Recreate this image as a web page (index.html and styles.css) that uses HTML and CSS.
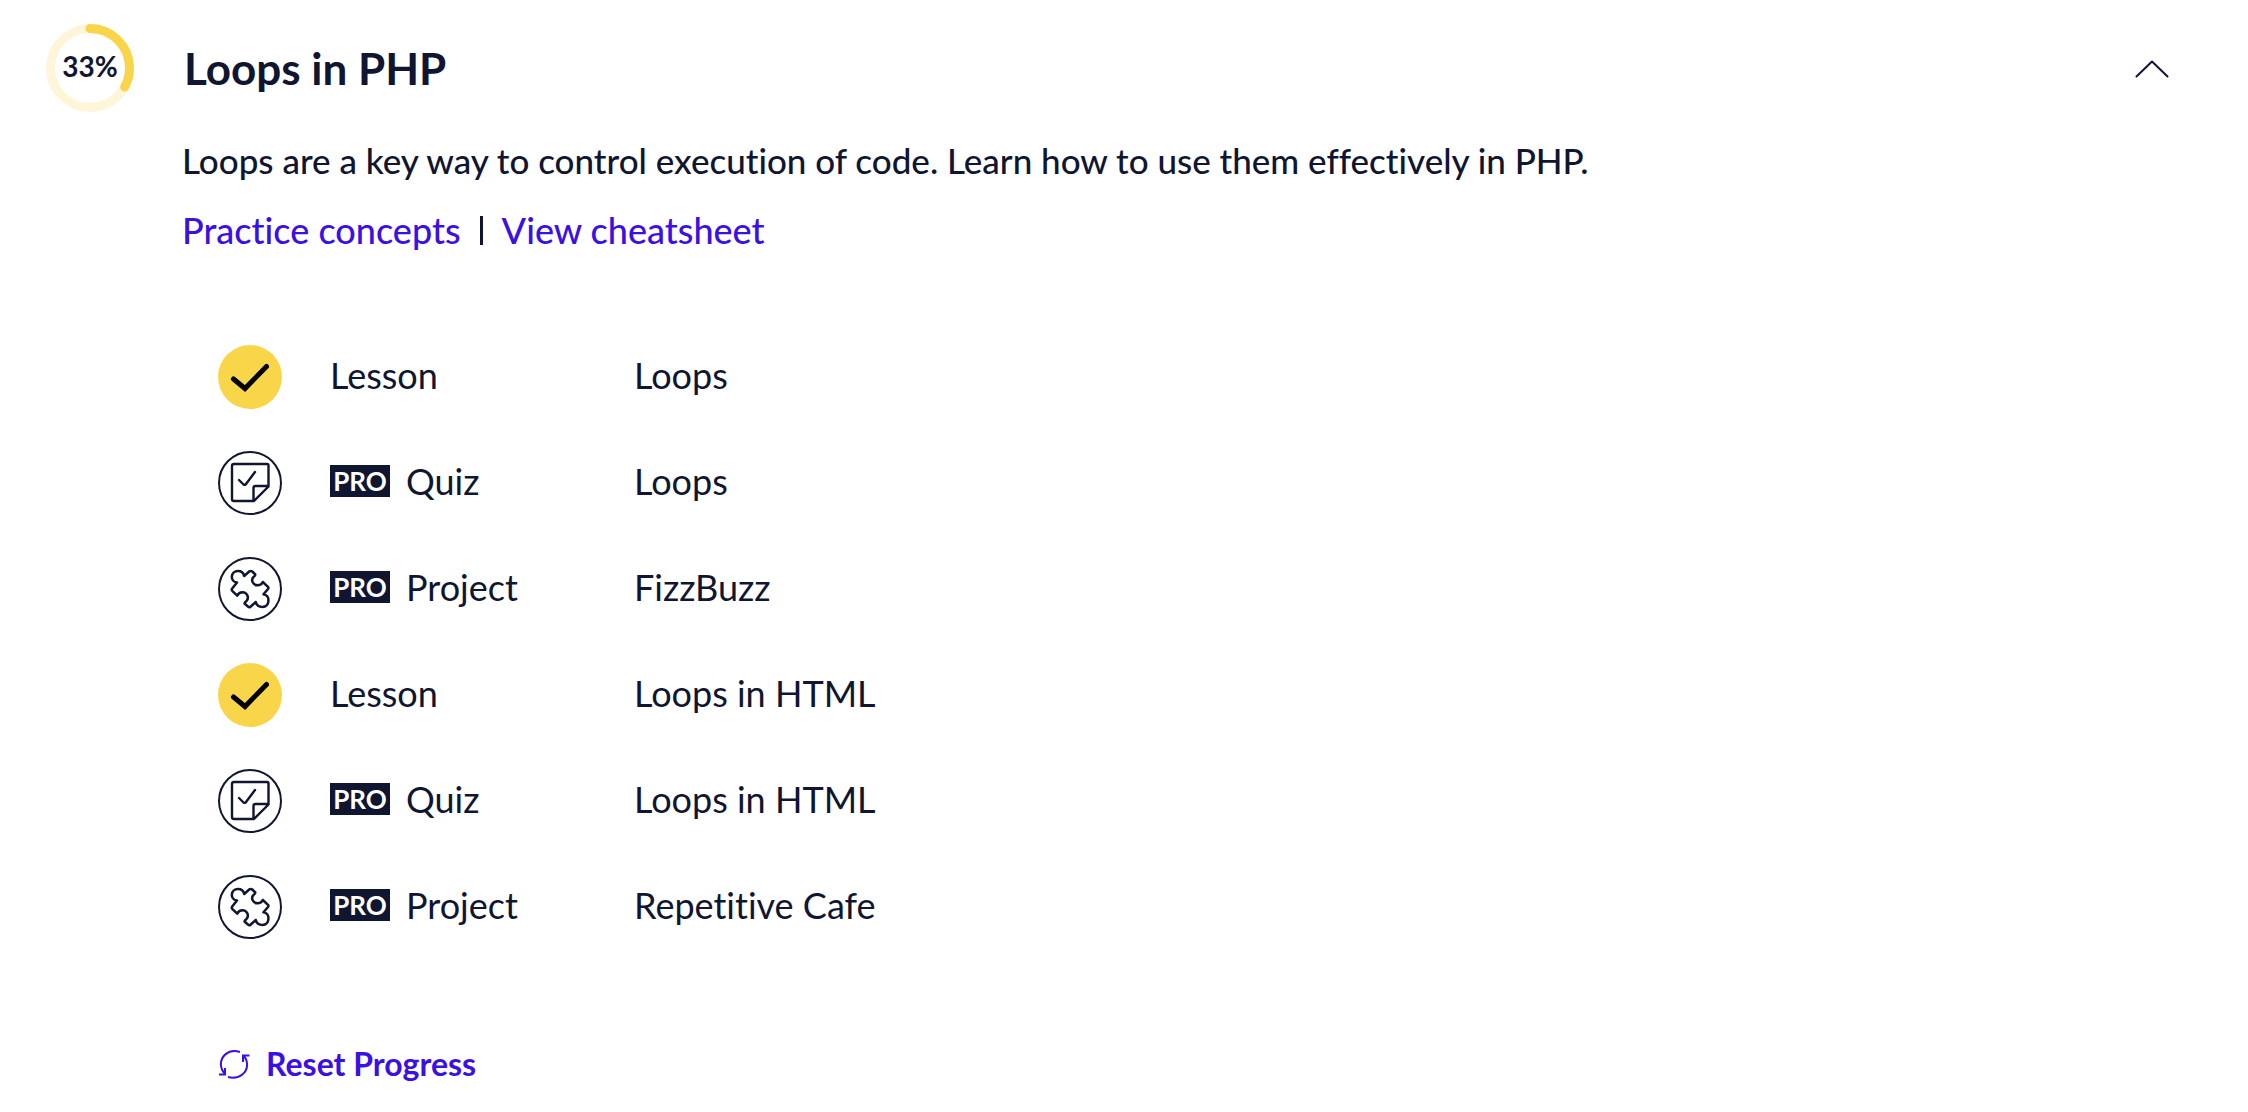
FILE: index.html
```html
<!DOCTYPE html>
<html lang="en">
<head>
<meta charset="utf-8">
<meta name="viewport" content="width=device-width, initial-scale=1">
<title>Loops in PHP</title>
<link rel="stylesheet" href="styles.css">
</head>
<body>
<svg class="sprite" aria-hidden="true">
  <symbol id="check" viewBox="0 0 64 64">
    <circle cx="32" cy="32" r="32" fill="#f9d649"/>
    <path d="M15.500 34 27 43.500 48.500 21.500" fill="none" stroke="#000" stroke-width="5" stroke-linecap="round" stroke-linejoin="miter"/>
  </symbol>
  <symbol id="quiz" viewBox="0 0 64 64">
    <g fill="none" stroke="currentColor" stroke-width="2.400" stroke-linecap="round" stroke-linejoin="round">
      <circle cx="32" cy="32" r="31" stroke-width="2"/>
      <path d="M16 13H49a1.500 1.500 0 0 1 1.500 1.500V35.500L36 50H16a2 2 0 0 1-2-2V15a2 2 0 0 1 2-2ZM50.500 35H37.500a2 2 0 0 0-2 2V50M21 29l4.500 4.500q1.500 1 2.500-.5L37 21"/>
    </g>
  </symbol>
  <symbol id="project" viewBox="0 0 64 64">
    <g fill="none" stroke="currentColor" stroke-width="2.500" stroke-linecap="round" stroke-linejoin="round">
      <circle cx="32" cy="32" r="31" stroke-width="2"/>
      <path d="M19 25.500C11.500 24.500 12.500 14 20 14C24 14 25.500 16 26.200 19L31.500 14.300Q33 13.500 34.300 14.500L37.300 17.500Q37.500 18.500 35.500 20C32.500 23 35 28.300 39.500 28.300C42.500 28.300 44 26.800 44.800 25L50 29.800Q50.800 31 50 32L45.500 37.200C52.500 38 52 50 44.500 50C40.500 50 38.500 48 37.800 45L32.500 49.700Q31.300 50.800 30.200 49.700L26.500 46.500Q26.300 45.800 28.500 44C31.500 40.500 29 35.200 24.500 35.200C21.500 35.200 20 36.800 19.200 38.700L14.200 33.800Q13.300 32.700 14.200 31.500Z"/>
    </g>
  </symbol>
</svg>

<main class="module">
  <header class="module-header">
    <div class="progress">
      <svg class="progress-ring" viewBox="0 0 88 88" aria-hidden="true">
        <circle cx="44" cy="44" r="39.500" fill="none" stroke="#fff6d9" stroke-width="9"/>
        <circle cx="44" cy="44" r="39.500" fill="none" stroke="#f9d649" stroke-width="9" stroke-linecap="round" pathLength="100" stroke-dasharray="33 100" transform="rotate(-90 44 44)"/>
      </svg>
      <span class="progress-label">33%</span>
    </div>
    <h1 class="module-title">Loops in PHP</h1>
    <button class="toggle" type="button" aria-label="Collapse module" aria-expanded="true">
      <svg width="36" height="20" viewBox="0 0 36 20" fill="none" stroke="currentColor" stroke-width="2" stroke-linecap="round" stroke-linejoin="round" aria-hidden="true"><path d="M2.500 18.500 18 3.500 33.500 18.500"/></svg>
    </button>
  </header>

  <section class="module-intro">
    <p class="description">Loops are a key way to control execution of code. Learn how to use them effectively in PHP.</p>
    <nav class="resources">
      <a href="#practice">Practice concepts</a>
      <span class="divider"></span>
      <a href="#cheatsheet">View cheatsheet</a>
    </nav>
  </section>

  <ul class="items">
    <li class="item"><svg class="item-icon"><use href="#check"/></svg><span class="kind">Lesson</span><span class="name">Loops</span></li>
    <li class="item"><svg class="item-icon"><use href="#quiz"/></svg><span class="kind"><b class="pro">PRO</b>Quiz</span><span class="name">Loops</span></li>
    <li class="item"><svg class="item-icon"><use href="#project"/></svg><span class="kind"><b class="pro">PRO</b>Project</span><span class="name">FizzBuzz</span></li>
    <li class="item"><svg class="item-icon"><use href="#check"/></svg><span class="kind">Lesson</span><span class="name">Loops in HTML</span></li>
    <li class="item"><svg class="item-icon"><use href="#quiz"/></svg><span class="kind"><b class="pro">PRO</b>Quiz</span><span class="name">Loops in HTML</span></li>
    <li class="item"><svg class="item-icon"><use href="#project"/></svg><span class="kind"><b class="pro">PRO</b>Project</span><span class="name">Repetitive Cafe</span></li>
  </ul>

  <button class="reset" type="button">
    <svg width="32" height="32" viewBox="0 0 32 32" fill="none" stroke="currentColor" stroke-width="2" aria-hidden="true">
      <path d="M22 4C10 0 2 9 3 18Q3.500 22 6 25M1 26.500H7V20M10 29C22 32 30 24 29 15Q28.500 11 26 8M31.500 7.500H25V14"/>
    </svg>
    Reset Progress
  </button>
</main>
</body>
</html>
```
FILE: styles.css
```css
* {
  box-sizing: border-box;
}

body {
  margin: 0;
  background: #fff;
  color: #10162f;
  font-family: Lato, "Open Sans", sans-serif;
  font-size: 36px;
  font-variant-ligatures: none;
  line-height: 48px;
}

.sprite {
  display: none;
}

.module {
  padding: 24px 78px 20px 46px;
}

.module-header {
  display: flex;
  align-items: center;
}

.progress {
  display: grid;
  place-items: center;
  width: 88px;
  height: 88px;
  margin-right: 50px;
}

.progress-ring,
.progress-label {
  grid-area: 1 / 1;
}

.progress-ring {
  width: 88px;
  height: 88px;
}

.progress-label {
  padding-bottom: 4px;
  font-size: 28px;
  font-weight: 700;
  line-height: 32px;
}

.module-title {
  flex: 1;
  margin: 0;
  font-size: 44px;
  font-weight: 700;
  line-height: 56px;
}

.toggle,
.reset {
  display: flex;
  align-items: center;
  padding: 0;
  border: 0;
  background: none;
  color: inherit;
  font: inherit;
  cursor: pointer;
}

.module-intro {
  padding: 24px 0 0 136px;
  font-weight: 500;
}

.description {
  margin: 0;
  font-size: 35px;
}

.resources {
  display: flex;
  align-items: center;
  gap: 19px;
  margin-top: 22px;
}

.resources a {
  color: #3a10e5;
  text-decoration: none;
}

.divider {
  width: 3px;
  height: 29px;
  background: #10162f;
}

.items {
  margin: 0;
  padding: 70px 0 0 172px;
  list-style: none;
}

.item {
  display: grid;
  grid-template-columns: 112px 304px 1fr;
  align-items: center;
  height: 106px;
}

.item-icon {
  width: 64px;
  height: 64px;
}

.kind,
.name {
  padding-bottom: 5px;
}

.kind {
  display: flex;
  align-items: center;
}

.pro {
  width: 60px;
  height: 32px;
  margin-right: 16px;
  background: #10162f;
  color: #fff;
  font-size: 26px;
  font-weight: 700;
  line-height: 32px;
  text-align: center;
}

.reset {
  gap: 16px;
  margin: 80px 0 0 172px;
  color: #3a10e5;
  font-size: 32px;
  font-weight: 700;
}
```
